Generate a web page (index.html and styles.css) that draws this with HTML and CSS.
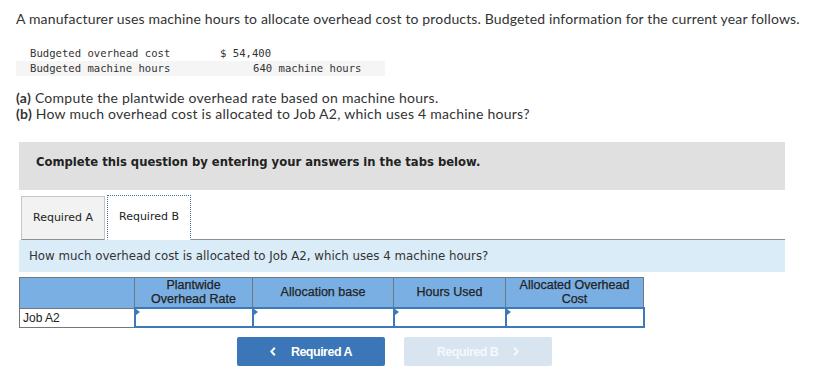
FILE: index.html
```html
<!DOCTYPE html>
<html>
<head>
<meta charset="utf-8">
<link rel="stylesheet" href="styles.css">
</head>
<body>
<div class="page">
  <p class="intro">A manufacturer uses machine hours to allocate overhead cost to products. Budgeted information for the current year follows.</p>
  <div class="data">
    <div class="drow"><span class="dlabel">Budgeted overhead cost</span><span class="dval">$ 54,400</span></div>
    <div class="drow alt"><span class="dlabel">Budgeted machine hours</span><span class="dval2">640 machine hours</span></div>
  </div>
  <div class="questions">
    <div><b>(a)</b> Compute the plantwide overhead rate based on machine hours.</div>
    <div><b>(b)</b> How much overhead cost is allocated to Job A2, which uses 4 machine hours?</div>
  </div>
  <div class="box">Complete this question by entering your answers in the tabs below.</div>
  <div class="tabs">
    <div class="tab">Required A</div>
    <div class="tab active">Required B</div>
    <div class="tabline"></div>
  </div>
  <div class="prompt">How much overhead cost is allocated to Job A2, which uses 4 machine hours?</div>
  <table class="grid">
    <tr class="head">
      <th class="c0"></th>
      <th class="c1">Plantwide<br>Overhead Rate</th>
      <th class="c2">Allocation base</th>
      <th class="c3">Hours Used</th>
      <th class="c4">Allocated Overhead<br>Cost</th>
    </tr>
    <tr class="body">
      <td class="label">Job A2</td>
      <td class="inp"><span class="mark"></span></td>
      <td class="inp"><span class="mark"></span></td>
      <td class="inp"><span class="mark"></span></td>
      <td class="inp"><span class="mark"></span></td>
    </tr>
  </table>
  <div class="nav">
    <div class="btn prev"><svg class="chev" width="6" height="9" viewBox="0 0 6 9"><polyline points="4.8,0.8 1.3,4.5 4.8,8.2" fill="none" stroke="#fff" stroke-width="2"/></svg>Required A</div>
    <div class="btn next">Required B<svg class="chev" width="6" height="9" viewBox="0 0 6 9"><polyline points="1.2,0.8 4.7,4.5 1.2,8.2" fill="none" stroke="#f5f8fc" stroke-width="2"/></svg></div>
  </div>
</div>
</body>
</html>
```

FILE: styles.css
```css
html, body { margin: 0; padding: 0; background: #fff; }
.page {
  padding: 10px 0 0 16px;
  font-family: Lato, "Open Sans", Arial, sans-serif;
  color: #333;
  width: 818px;
}
.intro {
  margin: 0;
  font-size: 14px;
  line-height: 18px;
  letter-spacing: 0.15px;
}
.data {
  margin-top: 18px;
  width: 369px;
  font-family: "DejaVu Sans Mono", "Liberation Mono", monospace;
  font-size: 10.6px;
  color: #333;
}
.drow { display: flex; height: 15px; line-height: 15px; padding-left: 14px; }
.drow.alt { background: #f5f5f5; }
.dlabel { width: 190px; }
.dval2 { padding-left: 33px; }
.questions {
  margin-top: 14px;
  font-size: 14px;
  line-height: 16px;
  letter-spacing: 0.25px;
}
.questions b { font-weight: 700; }
.box {
  margin: 20px 0 0 3px;
  width: 766px;
  height: 48px;
  background: #e0e0e0;
  box-sizing: border-box;
  padding: 0 0 0 17px;
  line-height: 40px;
  font-family: "DejaVu Sans", Verdana, sans-serif;
  font-weight: bold;
  font-size: 11.6px;
  color: #222;
}
.tabs {
  margin: 5px 0 0 3px;
  width: 766px;
  display: flex;
  align-items: flex-end;
  font-family: "DejaVu Sans", Verdana, sans-serif;
  font-size: 11px;
  color: #222;
}
.tab {
  box-sizing: border-box;
  height: 44px;
  line-height: 42px;
  padding: 0 11px;
  background: #f2f2f2;
  border: 1px solid #c6c6c6;
  border-bottom: 1px solid #8c8f93;
  margin-left: 2px;
}
.tab.active {
  background: #fff;
  height: 45px;
  border: 1px dotted #4a6e9c;
  border-bottom: 1px solid #fff;
  margin-left: 2px;
  padding: 0 11px;
}
.tabline { flex: 1; border-bottom: 1px solid #8c8f93; }
.prompt {
  margin-left: 3px;
  width: 766px;
  height: 32px;
  box-sizing: border-box;
  background: #dbecf9;
  padding-left: 10px;
  line-height: 32px;
  font-family: "DejaVu Sans", Verdana, sans-serif;
  font-size: 11.8px;
  color: #333;
}
.grid {
  margin: 5px 0 0 3px;
  border-collapse: collapse;
  font-family: "Liberation Sans", Arial, sans-serif;
  font-size: 12.5px;
}
.grid th {
  background: #7aafe3;
  border: 1px solid #6f7880;
  color: #222;
  font-weight: normal;
  height: 29px;
  padding: 0;
  line-height: 13.5px;
  -webkit-text-stroke: 0.25px #222;
}
.c0 { width: 114px; }
.c1 { width: 117px; }
.c2 { width: 140px; }
.c3 { width: 111px; }
.c4 { width: 137px; }
.grid td {
  height: 17px;
  padding: 0;
  border: 1px solid #6f7880;
  font-size: 12px;
}
.grid td.label { padding-left: 3px; color: #222; }
.grid td.inp {
  border: 2px solid #3d79ba;
  position: relative;
}
.mark {
  position: absolute;
  left: 0;
  top: 0;
  width: 0;
  height: 0;
  border-top: 3px solid transparent;
  border-bottom: 3px solid transparent;
  border-left: 4px solid #3d79ba;
}
.nav {
  display: flex;
  margin: 9px 0 0 221px;
  gap: 19px;
}
.btn {
  width: 148px;
  height: 29px;
  border-radius: 2px;
  display: flex;
  align-items: center;
  justify-content: center;
  font-family: "Liberation Sans", Arial, sans-serif;
  font-weight: bold;
  font-size: 12.5px;
  letter-spacing: -0.5px;
  color: #fff;
}
.btn.prev { background: #3a76b8; }
.btn.next { background: #d9e4f1; color: #f5f8fc; }
.chev { display: block; }
.prev .chev { margin-right: 15px; }
.next .chev { margin-left: 15px; }
```
